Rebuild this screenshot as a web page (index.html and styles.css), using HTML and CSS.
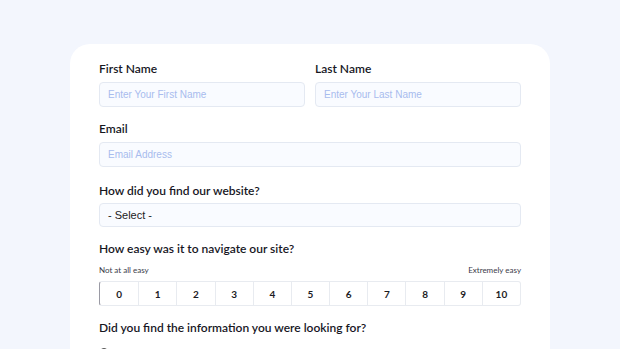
FILE: index.html
```html
<!DOCTYPE html>
<html>
<head>
<meta charset="utf-8">
<link rel="stylesheet" href="styles.css">
</head>
<body>
<div class="card">
  <div class="row">
    <div class="field">
      <div class="label">First Name</div>
      <div class="input placeholder">Enter Your First Name</div>
    </div>
    <div class="field">
      <div class="label">Last Name</div>
      <div class="input placeholder">Enter Your Last Name</div>
    </div>
  </div>
  <div class="field">
    <div class="label">Email</div>
    <div class="input placeholder">Email Address</div>
  </div>
  <div class="field select-field">
    <div class="label">How did you find our website?</div>
    <div class="input select">- Select -</div>
  </div>
  <div class="field">
    <div class="label">How easy was it to navigate our site?</div>
    <div class="scale-labels"><span>Not at all easy</span><span>Extremely easy</span></div>
    <div class="scale">
      <div class="cell first">0</div><div class="cell">1</div><div class="cell">2</div><div class="cell">3</div><div class="cell">4</div><div class="cell">5</div><div class="cell">6</div><div class="cell">7</div><div class="cell">8</div><div class="cell">9</div><div class="cell">10</div>
    </div>
  </div>
  <div class="field">
    <div class="label">Did you find the information you were looking for?</div>
    <div class="radio"><span class="circle"></span>Yes</div>
  </div>
</div>
</body>
</html>
```
FILE: styles.css
```css
html, body { margin: 0; padding: 0; }
body {
  background: #f3f6fd;
  font-family: Lato, "Noto Sans", sans-serif;
  color: #1c1c24;
  height: 349px;
  overflow: hidden;
}
.card {
  margin: 44px 0 0 70px;
  width: 480px;
  box-sizing: border-box;
  background: #ffffff;
  border-radius: 20px;
  padding: 17px 29px 40px 29px;
  min-height: 400px;
}
.row { display: flex; gap: 10px; }
.row .field { flex: 1; }
.field { margin-bottom: 14px; }
.select-field { margin-top: 16px; margin-bottom: 14px; }
.select-field .label { margin-bottom: 4px; }
.label {
  font-size: 12px;
  font-weight: 600;
  line-height: 16px;
  margin-bottom: 5px;
  color: #17171f;
}
.input {
  height: 25px;
  box-sizing: border-box;
  border: 1px solid #e4e9f2;
  border-radius: 4px;
  background: #f9fbff;
  padding: 0 8px;
  display: flex;
  align-items: center;
  font-family: "Liberation Sans", Arial, sans-serif;
  font-size: 10px;
}
.placeholder { color: #a8bcee; }
.select { color: #222; font-size: 11px; height: 24px; }
.scale-labels {
  display: flex;
  justify-content: space-between;
  font-size: 8px;
  color: #3a3a48;
  margin-top: 8px;
  line-height: 10px;
  margin-bottom: 6px;
}
.scale {
  display: grid;
  grid-template-columns: repeat(11, 1fr);
  height: 23px;
  border: 1px solid #e8ebf0;
  border-left: 1px solid #9a9aa4;
  border-radius: 3px;
}
.cell {
  display: flex;
  align-items: center;
  justify-content: center;
  font-size: 10px;
  font-weight: 700;
  border-left: 1px solid #e8ebf0;
}
.cell.first { border-left: none; }
.radio {
  display: flex;
  align-items: center;
  gap: 4px;
  font-size: 11px;
  margin-top: 10px;
}
.circle {
  width: 8px;
  height: 8px;
  border: 1px solid #555;
  border-radius: 50%;
}
```
